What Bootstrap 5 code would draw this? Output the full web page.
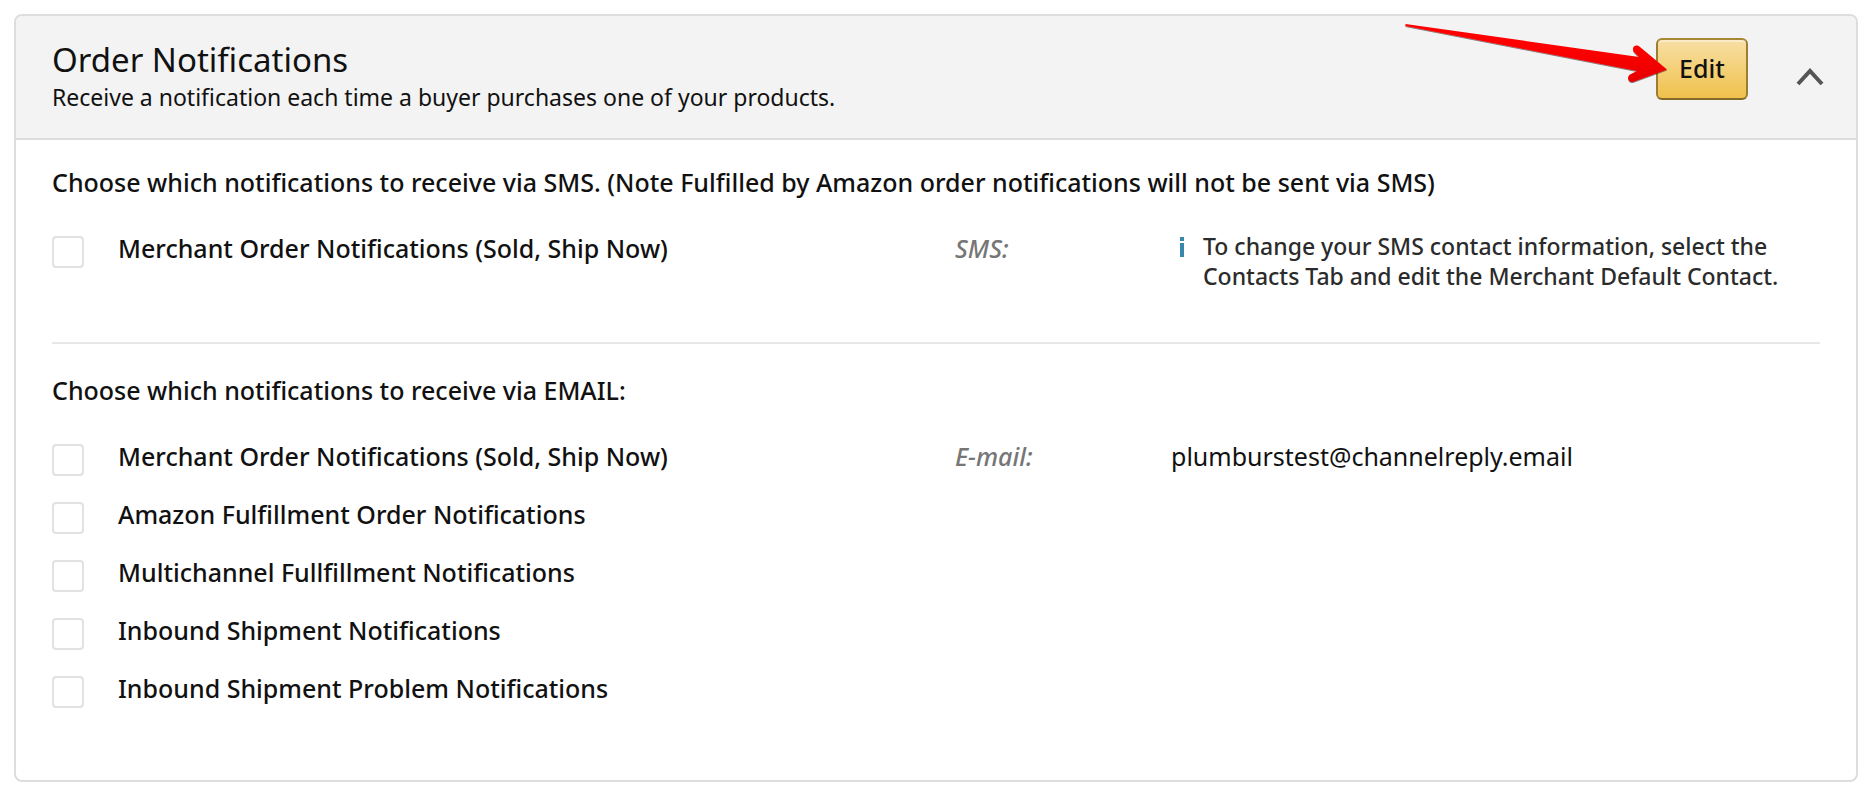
<!DOCTYPE html>
<html lang="en">
<head>
<meta charset="utf-8">
<meta name="viewport" content="width=device-width, initial-scale=1">
<title>Order Notifications</title>
<link href="https://cdn.jsdelivr.net/npm/bootstrap@5.3.0/dist/css/bootstrap.min.css" rel="stylesheet">
<style>
  body { font-family: "Noto Sans", "Open Sans", sans-serif; font-size: 25px; line-height: 34px; font-weight: 460; color: #111; background: #fff; }
  .panel { margin: 14px; border: 2px solid #ddd; border-radius: 8px; overflow: hidden; --bs-card-border-radius: 8px; }
  .panel-head { background: #f3f3f3; border-bottom: 2px solid #ddd; padding: 22px 30px 26px 36px; }
  .panel-title { font-size: 33px; line-height: 44px; font-weight: 400; margin: 0; }
  .sub { font-size: 23px; line-height: 30px; font-weight: 400; margin: 0; }
  .section-title { font-size: 25px; line-height: 34px; font-weight: 460; margin: 0 0 32px; }
  .panel-body { padding: 25px 36px 72px; }
  .btn-edit { font-size: 25px; line-height: 34px; font-weight: 460; padding: 11px 20px 13px; min-width: 92px; border: 2px solid; border-color: #a88734 #9c7e31 #846a29; border-radius: 6px; color: #111; background: linear-gradient(#f7dfa5, #f0c14b); box-shadow: inset 0 2px 0 rgba(255,255,255,.4); }
  .arrow { right: 78px; top: -20px; pointer-events: none; }
  .toggle { width: 32px; height: 32px; margin: 22px 0 0 46px; }
  .fields { display: grid; grid-template-columns: 903fr 206fr 659fr; }
  .choices { display: grid; gap: 21px; }
  .choice { display: flex; gap: 34px; }
  .choice .form-check-input { flex: none; width: 32px; height: 32px; margin: 5px 0 0; border: 2px solid #e2e2e2; border-radius: 4px; background-color: #fff; }
  .kind { font-style: italic; color: #767676; }
  .mail { padding-left: 10px; font-weight: 400; }
  .hint { display: flex; gap: 18px; padding-left: 18px; color: #2b2b2b; font-size: 23px; line-height: 30px; }
  .hint svg { flex: none; margin-top: 5px; }
  .split { border: 0; border-top: 2px solid #e7e7e7; opacity: 1; margin: 51px 0 29px; }
</style>
</head>
<body>
<main class="panel card">
  <header class="panel-head d-flex align-items-start">
    <div class="flex-grow-1">
      <h1 class="panel-title">Order Notifications</h1>
      <p class="sub">Receive a notification each time a buyer purchases one of your products.</p>
    </div>
    <div class="position-relative flex-shrink-0">
      <button type="button" class="btn btn-edit">Edit</button>
      <svg class="arrow position-absolute" width="270" height="72" viewBox="1400 18 270 72" aria-hidden="true">
        <defs>
          <linearGradient id="red" x1="0" y1="0" x2="0" y2="1"><stop offset=".4" stop-color="#ff0000"/><stop offset="1" stop-color="#e60000"/></linearGradient>
          <filter id="shade" x="-5%" y="-10%" width="110%" height="130%"><feDropShadow dx="0" dy="1" stdDeviation="0.7" flood-opacity=".5"/></filter>
        </defs>
        <path fill="url(#red)" filter="url(#shade)" d="M1405.500 24 L1639 57 L1634 52 C1631 48 1635 43 1640 47 L1667 69.500 L1633 82 C1628 83 1626 76 1631 74 L1637 71 L1405.500 26 Z"/>
      </svg>
    </div>
    <button type="button" class="toggle btn p-0 border-0 flex-shrink-0 d-flex align-items-center justify-content-center" aria-label="Collapse">
      <svg width="32" height="32" viewBox="0 0 32 32" fill="none" stroke="#555" stroke-width="4"><path d="M4 24 L16 11 L28 24"/></svg>
    </button>
  </header>
  <div class="panel-body">
    <section>
      <h2 class="section-title">Choose which notifications to receive via SMS. (Note Fulfilled by Amazon order notifications will not be sent via SMS)</h2>
      <div class="fields">
        <div class="choices">
          <div class="choice"><input class="form-check-input" type="checkbox" id="sms1"><label for="sms1">Merchant Order Notifications (Sold, Ship Now)</label></div>
        </div>
        <div class="kind">SMS:</div>
        <div class="hint">
          <svg width="6" height="22" viewBox="0 0 6 22" fill="#3a87ad" aria-hidden="true"><path d="M1 1h4v4H1zM1 7h4v14H1z"/></svg>
          <span>To change your SMS contact information, select the<br>Contacts Tab and edit the Merchant Default Contact.</span>
        </div>
      </div>
    </section>
    <hr class="split">
    <section>
      <h2 class="section-title">Choose which notifications to receive via EMAIL:</h2>
      <div class="fields">
        <div class="choices">
          <div class="choice"><input class="form-check-input" type="checkbox" id="em1"><label for="em1">Merchant Order Notifications (Sold, Ship Now)</label></div>
          <div class="choice"><input class="form-check-input" type="checkbox" id="em2"><label for="em2">Amazon Fulfillment Order Notifications</label></div>
          <div class="choice"><input class="form-check-input" type="checkbox" id="em3"><label for="em3">Multichannel Fullfillment Notifications</label></div>
          <div class="choice"><input class="form-check-input" type="checkbox" id="em4"><label for="em4">Inbound Shipment Notifications</label></div>
          <div class="choice"><input class="form-check-input" type="checkbox" id="em5"><label for="em5">Inbound Shipment Problem Notifications</label></div>
        </div>
        <div class="kind">E-mail:</div>
        <div class="mail">plumburstest@channelreply.email</div>
      </div>
    </section>
  </div>
</main>
<script src="https://cdn.jsdelivr.net/npm/bootstrap@5.3.0/dist/js/bootstrap.bundle.min.js"></script>
</body>
</html>
